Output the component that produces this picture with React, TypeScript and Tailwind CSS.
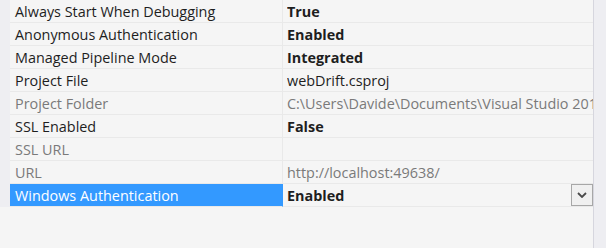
import React from "react";

type Row = { name: string; value: string; bold?: boolean; gray?: boolean; selected?: boolean };

const rows: Row[] = [
  { name: "Always Start When Debugging", value: "True", bold: true },
  { name: "Anonymous Authentication", value: "Enabled", bold: true },
  { name: "Managed Pipeline Mode", value: "Integrated", bold: true },
  { name: "Project File", value: "webDrift.csproj" },
  { name: "Project Folder", value: "C:\\Users\\Davide\\Documents\\Visual Studio 2013\\Projects\\webDrift", gray: true },
  { name: "SSL Enabled", value: "False", bold: true },
  { name: "SSL URL", value: "", gray: true },
  { name: "URL", value: "http://localhost:49638/", gray: true },
  { name: "Windows Authentication", value: "Enabled", bold: true, selected: true },
];

export default function App() {
  return (
    <div
      className="w-[606px] h-[248px] flex bg-[#f5f5f5] overflow-hidden text-[14.4px] text-[#1e1e1e]"
      style={{ fontFamily: '"Open Sans", "Noto Sans", sans-serif' }}
    >
      <div className="w-[593px] flex flex-col">
        {rows.map((r) => (
          <div key={r.name} className="flex h-[23px]">
            <div className="w-[10px] bg-[#eeeef2]" />
            <div
              className={
                "w-[272px] pl-[5px] pt-[1px] flex items-center border-b border-[#e9e9e9] whitespace-nowrap overflow-hidden " +
                (r.selected ? "bg-[#3399ff] text-white" : r.gray ? "text-[#7a7a7a]" : "")
              }
            >
              {r.name}
            </div>
            <div
              className={
                "flex-1 min-w-0 pl-[4px] flex items-center border-b border-l border-[#e9e9e9] whitespace-nowrap overflow-hidden " +
                (r.selected ? "border-l-[#3399ff]" : "")
              }
            >
              <span
                className={
                  "flex-1 min-w-0 overflow-hidden pt-[1px] " +
                  (r.bold ? "font-bold " : "") +
                  (r.gray ? "text-[#7a7a7a]" : "")
                }
              >
                {r.value}
              </span>
              {r.selected && (
                <div className="w-[22px] h-[22px] border border-[#a7a7a7] bg-[#f0f0f0] flex items-center justify-center shrink-0">
                  <svg width="10" height="6" viewBox="0 0 10 6">
                    <path d="M1 1 L5 5 L9 1" fill="none" stroke="#4a4a4a" strokeWidth="1.8" />
                  </svg>
                </div>
              )}
            </div>
          </div>
        ))}
      </div>
      <div className="w-px bg-[#d6d6de]" />
      <div className="flex-1 bg-[#eeeef2]" />
    </div>
  );
}
